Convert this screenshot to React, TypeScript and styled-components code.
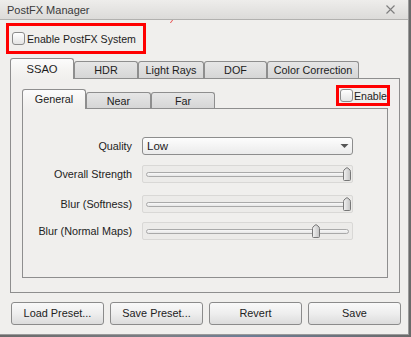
import React from "react";
import styled, { createGlobalStyle } from "styled-components";

const FONT = `"Liberation Sans", Arial, sans-serif`;

const Global = createGlobalStyle`
  html, body { margin: 0; padding: 0; }
  body {
    background: #6f7379;
    font-family: ${FONT};
    font-size: 10.8px;
    color: #1c1c1c;
    overflow: hidden;
    white-space: nowrap;
  }
  * { box-sizing: border-box; }
`;

const Screen = styled.div`
  width: 411px;
  height: 337px;
  background: linear-gradient(90deg, #6a6a6a 0%, #7b7f86 40%, #6d7d94 60%, #6a6a6a 100%);
  overflow: hidden;
`;

const Window = styled.div`
  position: relative;
  width: 409px;
  height: 335px;
  background: #f0efed;
  border-right: 1px solid #9a9a9a;
  border-bottom: 1px solid #9a9a9a;
  display: flex;
  flex-direction: column;
`;

const TitleBar = styled.div`
  height: 20px;
  border-bottom: 1px solid #b2b1af;
  background: linear-gradient(#eeedeb, #dcdbd9);
  display: flex;
  align-items: center;
  justify-content: space-between;
  padding: 0 13px 0 7px;
  color: #3a3a3a;
  font-size: 11px;
`;

const Mark = styled.span`
  position: absolute;
  left: 171px;
  top: 20px;
  width: 1px;
  height: 3px;
  background: #e84848;
  transform: skewX(-35deg);
`;

const RedBox = styled.label<{ $w: number; $h: number }>`
  display: flex;
  align-items: center;
  width: ${(p) => p.$w}px;
  height: ${(p) => p.$h}px;
  border: 3px solid #ff0000;
  gap: 2px;
  font-size: 10.6px;
`;

const TopRedBox = styled(RedBox)`
  margin: 3px 0 0 6px;
  padding-left: 3px;
`;

const CornerRedBox = styled(RedBox)`
  align-self: flex-start;
  margin-right: -2px;
  padding-left: 1px;
  gap: 1px;
`;

const Check = styled.span`
  width: 13px;
  height: 13px;
  border: 1px solid #8b8b8b;
  border-radius: 3px;
  background: linear-gradient(#ffffff, #e4e4e4);
  flex: none;
`;

const OuterWidget = styled.div`
  margin: 4px 0 0 10px;
  width: 390px;
  display: flex;
  flex-direction: column;
`;

const TabBar = styled.div<{ $h: number }>`
  display: flex;
  align-items: flex-end;
  height: ${(p) => p.$h}px;
  margin-bottom: -1px;
  position: relative;
  z-index: 1;
`;

const Tab = styled.div<{ $w: number; $active?: boolean; $inner?: boolean }>`
  width: ${(p) => p.$w}px;
  height: ${(p) => (p.$active ? (p.$inner ? 20 : 21) : p.$inner ? 16 : 17)}px;
  margin-bottom: ${(p) => (p.$active ? 0 : 1)}px;
  border: 1px solid #8e8e8e;
  border-bottom: none;
  border-radius: 3px 3px 0 0;
  background: ${(p) =>
    p.$active ? "linear-gradient(#fcfcfc, #f4f3f1 60%, #f0efed)" : "linear-gradient(#e6e6e6, #d6d6d6)"};
  display: flex;
  align-items: center;
  justify-content: center;
  padding-bottom: ${(p) => (p.$active ? 1 : 0)}px;
  font-size: ${(p) => (p.$active && !p.$inner ? 11.2 : 10.8)}px;
  flex: none;
`;

const OuterPane = styled.div`
  height: 215px;
  border: 1px solid #8e8e8e;
  padding: 6px 11px 14px 11px;
  display: flex;
  flex-direction: column;
`;

const InnerTabRow = styled.div`
  height: 24px;
  margin-bottom: -1px;
  display: flex;
  justify-content: space-between;
  position: relative;
  z-index: 1;
`;

const InnerTabs = styled.div`
  display: flex;
  align-items: flex-end;
  align-self: flex-end;
`;

const InnerPane = styled.div`
  height: 170px;
  border: 1px solid #8e8e8e;
  padding-top: 28px;
  display: flex;
  flex-direction: column;
`;

const Row = styled.div<{ $mt: number }>`
  display: grid;
  grid-template-columns: 109px 211px;
  column-gap: 10px;
  align-items: center;
  margin-top: ${(p) => p.$mt}px;
`;

const Label = styled.span`
  text-align: right;
  color: #222;
`;

const Combo = styled.div`
  height: 18px;
  border: 1px solid #8d8d8d;
  border-radius: 3px;
  background: linear-gradient(#fdfdfd, #ebebeb);
  display: flex;
  align-items: center;
  justify-content: space-between;
  padding: 0 3px 0 4px;
  font-size: 11.5px;
`;

const SliderFrame = styled.div`
  position: relative;
  height: 18px;
  border: 1px solid #d9d8d6;
  border-radius: 2px;
  background: #ecebe9;
`;

const Groove = styled.div`
  position: absolute;
  left: 3px;
  right: 3px;
  top: 6px;
  height: 5px;
  border: 1px solid #a9a9a9;
  border-radius: 3px;
  background: linear-gradient(#f8f8f8, #e6e6e6);
`;

const Handle = styled.svg`
  position: absolute;
  top: 1px;
  width: 8px;
  height: 14px;
`;

const ButtonRow = styled.div`
  display: flex;
  gap: 6px;
  margin: 9px 0 0 11px;
`;

const Button = styled.button`
  width: 93px;
  height: 23px;
  border: 1px solid #8b8b8b;
  border-radius: 3px;
  background: linear-gradient(#f9f9f9, #eeeeee 50%, #dcdcdc);
  font-family: ${FONT};
  font-size: 10.9px;
  color: #222;
  padding: 0;
  padding-bottom: 1px;
`;

const Slider: React.FC<{ value: number }> = ({ value }) => (
  <SliderFrame>
    <Groove />
    <Handle viewBox="0 0 8 14" style={{ left: `${value * 200}px` }}>
      <defs>
        <linearGradient id="hg" x1="0" y1="0" x2="1" y2="0">
          <stop offset="0" stopColor="#f2f2f2" />
          <stop offset="1" stopColor="#c4c4c4" />
        </linearGradient>
      </defs>
      <path
        d="M1.5 13.5 Q0.5 13.5 0.5 12.5 V4.5 Q0.5 3 2 2 L4 0.6 L6 2 Q7.5 3 7.5 4.5 V12.5 Q7.5 13.5 6.5 13.5 Z"
        fill="url(#hg)"
        stroke="#777"
        strokeWidth="1"
      />
    </Handle>
  </SliderFrame>
);

export default function App() {
  return (
    <>
      <Global />
      <Screen>
        <Window>
          <TitleBar>
            <span>PostFX Manager</span>
            <svg width="9" height="9" viewBox="0 0 9 9">
              <path d="M0.5 0.5 L8.5 8.5 M8.5 0.5 L0.5 8.5" stroke="#7d7d7d" strokeWidth="1.1" />
            </svg>
          </TitleBar>
          <Mark />
          <TopRedBox $w={140} $h={31}>
            <Check />
            <span>Enable PostFX System</span>
          </TopRedBox>
          <OuterWidget>
            <TabBar $h={21}>
              <Tab $w={64} $active>SSAO</Tab>
              <Tab $w={64}>HDR</Tab>
              <Tab $w={66}>Light Rays</Tab>
              <Tab $w={63}>DOF</Tab>
              <Tab $w={92}>Color Correction</Tab>
            </TabBar>
            <OuterPane>
              <InnerTabRow>
                <InnerTabs>
                  <Tab $w={64} $active $inner>General</Tab>
                  <Tab $w={65} $inner>Near</Tab>
                  <Tab $w={64} $inner>Far</Tab>
                </InnerTabs>
                <CornerRedBox $w={54} $h={21}>
                  <Check />
                  <span>Enable</span>
                </CornerRedBox>
              </InnerTabRow>
              <InnerPane>
                <Row $mt={0}>
                  <Label>Quality</Label>
                  <Combo>
                    <span>Low</span>
                    <svg width="9" height="6" viewBox="0 0 9 6">
                      <path d="M0.5 1 H8.5 L4.5 5 Z" fill="#555" />
                    </svg>
                  </Combo>
                </Row>
                <Row $mt={10}>
                  <Label>Overall Strength</Label>
                  <Slider value={1} />
                </Row>
                <Row $mt={12}>
                  <Label>Blur (Softness)</Label>
                  <Slider value={1} />
                </Row>
                <Row $mt={9}>
                  <Label>Blur (Normal Maps)</Label>
                  <Slider value={0.845} />
                </Row>
              </InnerPane>
            </OuterPane>
          </OuterWidget>
          <ButtonRow>
            <Button>Load Preset...</Button>
            <Button>Save Preset...</Button>
            <Button>Revert</Button>
            <Button>Save</Button>
          </ButtonRow>
        </Window>
      </Screen>
    </>
  );
}
